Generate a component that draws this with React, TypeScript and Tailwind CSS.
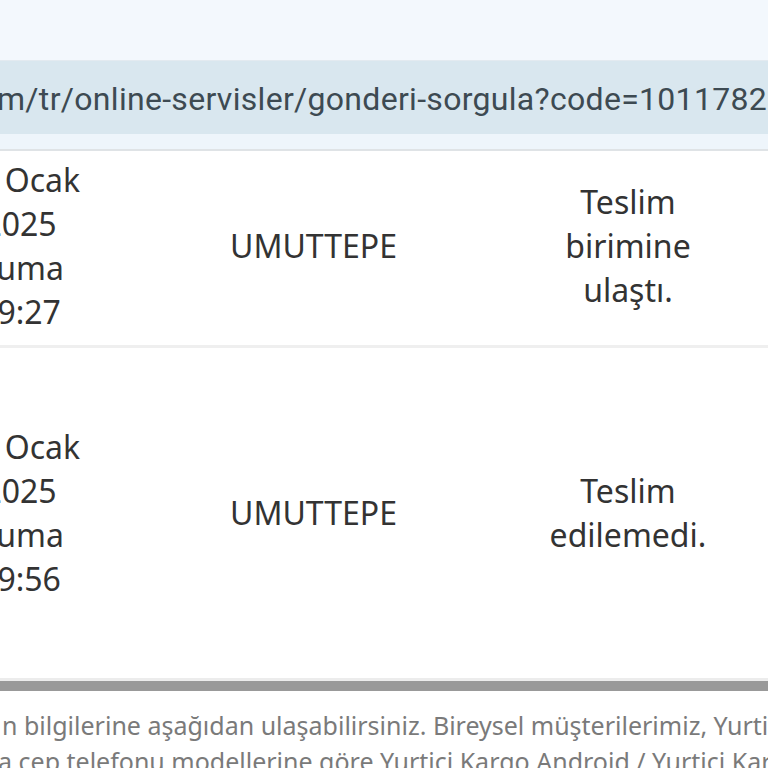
import React from "react";

const ROWS = [
  { date: ["31 Ocak", "2025", "Cuma", "19:27"], unit: "UMUTTEPE", status: ["Teslim", "birimine", "ulaştı."], h: "h-[197px] pb-[4px]" },
  { date: ["31 Ocak", "2025", "Cuma", "19:56"], unit: "UMUTTEPE", status: ["Teslim", "edilemedi."], h: "h-[330px]" },
];

export default function App() {
  return (
    <div className="w-[768px] h-[768px] overflow-hidden bg-white flex flex-col">
      {/* browser chrome */}
      <div className="h-[61px] shrink-0 bg-[#f3f8fd] border-b border-[#e3eaf0]" />
      <div className="h-[73px] shrink-0 bg-[#d9e7ef] flex items-center overflow-hidden">
        <span
          className="whitespace-nowrap ml-[-3px] pt-[2px] text-[32px] text-[#3d4a52] tracking-[0.3px]"
          style={{ fontFamily: "Roboto, 'Liberation Sans', sans-serif" }}
        >
          m/tr/online-servisler/gonderi-sorgula?code=10117823
        </span>
      </div>
      <div className="h-[17px] shrink-0 bg-[#eef5fb] border-b-2 border-[#dfe3e6]" />

      {/* shipment table */}
      <div
        className="flex flex-col shrink-0 text-[32px] leading-[44px] text-[#333333] overflow-hidden"
        style={{ fontFamily: "'Noto Sans', 'Open Sans', sans-serif" }}
      >
        {ROWS.map((r, i) => (
          <div key={i} className={`flex items-center shrink-0 ${r.h} ${i === 0 ? "border-b-[3px] border-[#efefef]" : ""}`}>
            <div className="w-[240px] shrink-0 ml-[-100px] flex flex-col items-center text-center">
              {r.date.map((d) => (
                <span key={d}>{d}</span>
              ))}
            </div>
            <div className="w-[347px] shrink-0 text-center">{r.unit}</div>
            <div className="w-[282px] shrink-0 flex flex-col items-center text-center">
              {r.status.map((s) => (
                <span key={s}>{s}</span>
              ))}
            </div>
          </div>
        ))}
      </div>

      <div className="h-[3px] shrink-0 bg-[#ececec]" />
      <div className="h-[10px] shrink-0 bg-[#999999]" />

      {/* footer note */}
      <div
        className="pt-[16px] text-[25px] leading-[36px] text-[#7a7a7a] whitespace-nowrap overflow-hidden"
        style={{ fontFamily: "'Noto Sans', 'Open Sans', sans-serif" }}
      >
        <p className="ml-[2px]">n bilgilerine aşağıdan ulaşabilirsiniz. Bireysel müşterilerimiz, Yurtiçi</p>
        <p className="ml-[-2px]">a cep telefonu modellerine göre Yurtiçi Kargo Android / Yurtiçi Kargo</p>
      </div>
    </div>
  );
}
